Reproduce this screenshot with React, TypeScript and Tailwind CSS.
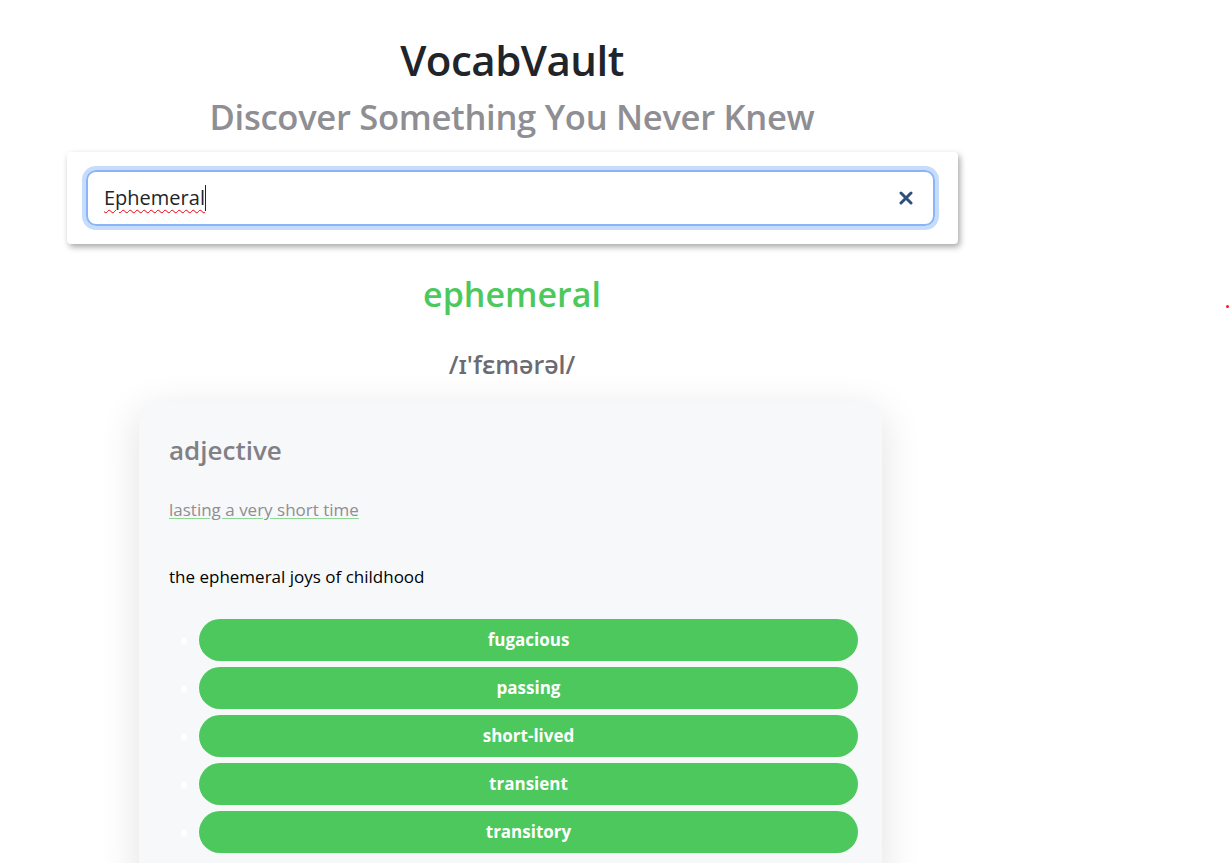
export default function App() {
  const synonyms = ['fugacious', 'passing', 'short-lived', 'transient', 'transitory']

  return (
    <div
      className="relative min-h-screen bg-white overflow-hidden"
      style={{ fontFamily: '"Open Sans", "Noto Sans", sans-serif' }}
    >
      {/* stray dot on the right edge */}
      <div className="absolute left-[1226px] top-[305px] h-[3px] w-[3px] rounded-full bg-[#ff1a1a]" />

      <div className="w-[1024px] flex flex-col items-center pt-[34px]">
        <h1 className="text-[42px] leading-[52px] font-semibold text-[#212529] tracking-[-0.5px]">VocabVault</h1>
        <h2 className="mt-[9px] text-[34.6px] leading-[44px] font-semibold text-[#8e8e93] tracking-[-0.3px]">
          Discover Something You Never Knew
        </h2>

        <div className="mt-[13px] w-[891px] ml-[1px] bg-white rounded-[4px] shadow-[2px_3px_6px_rgba(0,0,0,0.35)] pl-[19px] pr-[23px] py-[18px]">
          <div className="flex items-center h-[56px] rounded-[10px] border-2 border-[#8ab4f8] ring-4 ring-[#c6dcfb] px-[16px]">
            <span className="text-[20px] text-[#212529] underline decoration-wavy decoration-red-600 decoration-1 underline-offset-4">
              Ephemeral
            </span>
            <span className="w-[1px] h-[26px] bg-[#212529]" />
            <span className="ml-auto mr-[4px] text-[#2c4f80]">
              <svg width="14" height="14" viewBox="0 0 14 14">
                <path d="M2 2 L12 12 M12 2 L2 12" stroke="currentColor" strokeWidth="3" strokeLinecap="round" />
              </svg>
            </span>
          </div>
        </div>

        <div className="mt-[28px] text-[34px] leading-[44px] font-semibold text-[#4cc85c]">ephemeral</div>
        <div className="mt-[32px] text-[25px] leading-[32px] font-semibold text-[#6b6b70]">/ɪ'fɛmərəl/</div>

        <div className="mt-[22px] mr-[3px] w-[743px] bg-[#f7f8fa] rounded-[14px] shadow-[0_10px_40px_rgba(0,0,0,0.12)] px-[30px] pt-[31px] pb-[30px]">
          <div className="text-[26px] leading-[34px] font-semibold text-[#808086]">adjective</div>
          <p className="mt-[30px] text-[17px] text-[#8e8e93] underline decoration-[#8fd897] underline-offset-2">
            lasting a very short time
          </p>
          <p className="mt-[41px] text-[17px] text-black">the ephemeral joys of childhood</p>
          <ul className="mt-[30px] pl-[30px] list-disc marker:text-white flex flex-col gap-[6px]">
            {synonyms.map((s) => (
              <li key={s}>
                <div className="w-[659px] h-[42px] rounded-full bg-[#4cc85c] flex items-center justify-center text-[17px] font-bold text-white">
                  {s}
                </div>
              </li>
            ))}
          </ul>
        </div>
      </div>
    </div>
  )
}
